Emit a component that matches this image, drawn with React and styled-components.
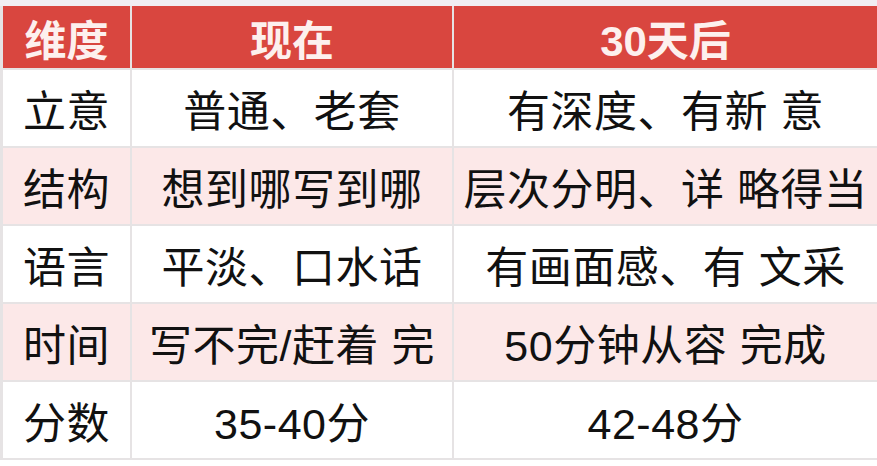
import React from 'react';
import styled, { createGlobalStyle } from 'styled-components';

const GlobalStyle = createGlobalStyle`
  html, body {
    margin: 0;
    padding: 0;
    background: #ffffff;
  }
  body {
    font-family: "Liberation Sans", "Noto Sans CJK SC", sans-serif;
    color: #111111;
  }
`;

const Page = styled.div`
  width: 877px;
  height: 466px;
  overflow: hidden;
  padding-top: 6px;
  box-sizing: border-box;
  background: linear-gradient(#f1eef2 0 6px, #ffffff 6px);
`;

const Table = styled.div`
  display: grid;
  grid-template-columns: 127px 320px 1fr;
  grid-auto-rows: 76px;
  grid-template-rows: 62px;
  row-gap: 2px;
  column-gap: 2px;
  background: #e6e3e4;
  border-left: 3px solid #e6e3e4;
  border-bottom: 2px solid #e6e3e4;
`;

const HeadCell = styled.div`
  display: flex;
  align-items: center;
  justify-content: center;
  background: #d9463f;
  color: #fdf0ee;
  font-size: 42px;
  font-weight: 700;
  white-space: nowrap;
`;

const Cell = styled.div`
  display: flex;
  align-items: center;
  justify-content: center;
  background: ${(p) => (p.$tinted ? '#fce8e8' : '#ffffff')};
  font-size: 43px;
  letter-spacing: 0.5px;
  white-space: nowrap;
  overflow: hidden;
`;

const rows = [
  ['立意', '普通、老套', '有深度、有新 意'],
  ['结构', '想到哪写到哪', '层次分明、详 略得当'],
  ['语言', '平淡、口水话', '有画面感、有 文采'],
  ['时间', '写不完/赶着 完', '50分钟从容 完成'],
  ['分数', '35-40分', '42-48分'],
];

export default function App() {
  return (
    <>
      <GlobalStyle />
      <Page>
        <Table>
          <HeadCell>维度</HeadCell>
          <HeadCell>现在</HeadCell>
          <HeadCell>30天后</HeadCell>
          {rows.map((row, i) =>
            row.map((text, j) => (
              <Cell key={`${i}-${j}`} $tinted={i % 2 === 1}>
                {text}
              </Cell>
            ))
          )}
        </Table>
      </Page>
    </>
  );
}
